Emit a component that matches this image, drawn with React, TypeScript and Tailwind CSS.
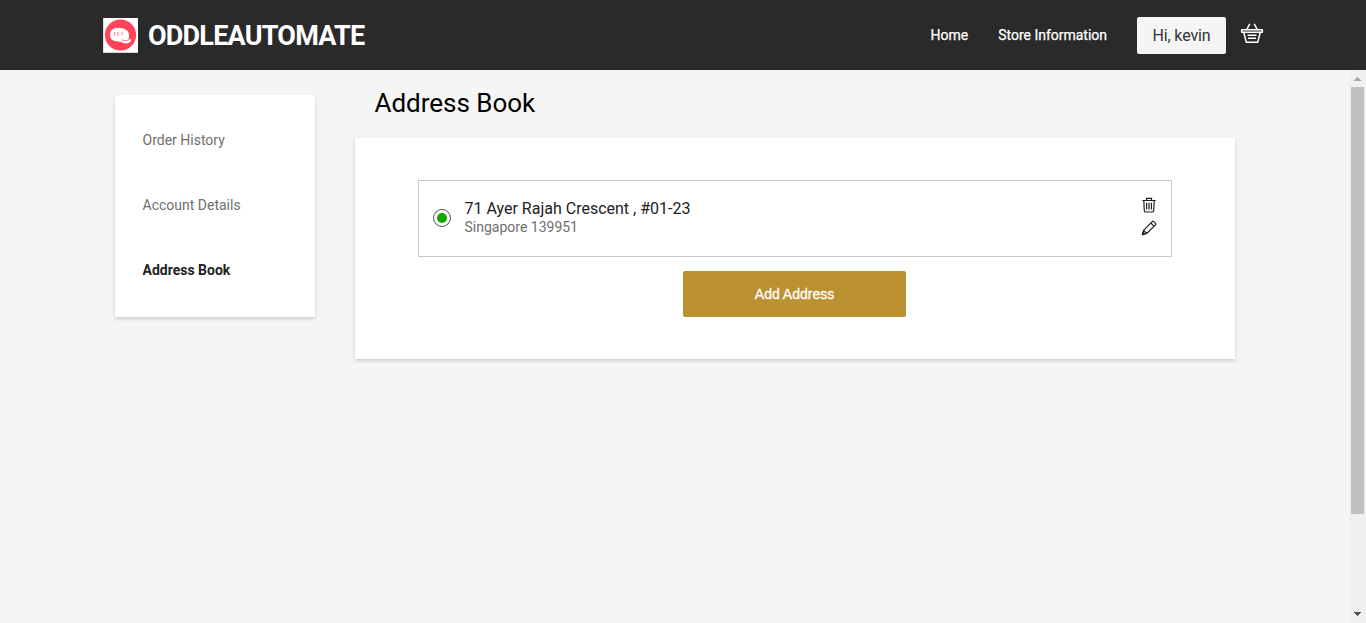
import React from "react";

function FistLogo() {
  return (
    <svg width="35" height="35" viewBox="0 0 35 35" className="shrink-0" aria-hidden="true">
      <rect width="35" height="35" fill="#fff" />
      <path d="M0 34.500h35M.3 0v35" stroke="#bbb" strokeWidth=".6" />
      <circle cx="17.500" cy="17" r="15.600" fill="#ff4459" />
      <path
        d="M7.400 14.500C7.700 12.200 8.900 11 10.700 11c.9-1.300 2.700-1.600 4.100-.8 1.400-.9 3.200-.7 4.300.4 1.600-.4 3 .2 3.700 1.400 2 .4 2.800 1.900 3.100 4.200.3 2.300.1 3.900-.6 5.600l2.800-.7c.2 2-.6 3.300-2.400 3.900-2.600.8-5.600.4-7.600-1.300-2.900.1-6.500-.4-9.200-1.900-1.700-1.600-2-4.200-1.500-7.300z"
        fill="#fff"
      />
      <path
        d="M11.700 14.500c-.3 1.300-.3 2.300-.1 3.300M15.100 14c-.3 1.400-.3 2.600 0 3.700M19 14c-.2 1.200-.1 2.100.3 3M18.700 21.900c2 .9 4.200 1 6.500.2"
        fill="none"
        stroke="#ff4459"
        strokeWidth=".7"
        strokeLinecap="round"
      />
    </svg>
  );
}

function BasketIcon() {
  return (
    <svg width="24" height="24" viewBox="0 0 24 24" fill="none" stroke="#fff" strokeWidth="1.500" strokeLinejoin="round" aria-hidden="true">
      <path d="M1.700 8.700h20.600v2.600H1.700zM3.700 11.300l2.600 9.900h11.400l2.600-9.900M6.800 8.400l3-5.600M17.200 8.400l-3-5.600M7.500 14.300h9M8 17.300h8" />
    </svg>
  );
}

function TrashIcon() {
  return (
    <svg width="16" height="16" viewBox="0 0 16 16" fill="none" stroke="#222" strokeWidth="1.200" aria-hidden="true">
      <path d="M1.300 3.500h13.400M5.500 3.300V1.400h5v1.900M2.800 3.500l.5 10.200q.1 1.300 1.300 1.300h6.800q1.200 0 1.300-1.300l.5-10.200M5.600 5.800v6.700M8 5.800v6.700M10.400 5.800v6.700" />
    </svg>
  );
}

function PencilIcon() {
  return (
    <svg width="16" height="16" viewBox="0 0 16 16" fill="none" stroke="#222" strokeWidth="1.200" strokeLinejoin="round" aria-hidden="true">
      <path d="M1.400 14.600l1.100-4.300 8.700-8.700q.8-.8 1.600 0l1.700 1.700q.8.8 0 1.600L5.700 13.500zM2.500 10.300l3.200 3.200M9.800 3l3.200 3.200" />
      <path d="M1.400 14.600l.6-2.100 1.500 1.500z" fill="#222" />
    </svg>
  );
}

function Scrollbar() {
  return (
    <div className="flex w-[17px] shrink-0 flex-col items-center justify-between bg-[#f0f0f0]" aria-hidden="true">
      <div className="flex flex-col items-center">
        <svg width="17" height="17" shapeRendering="crispEdges">
          <path d="M5 11h7v-1h-1V9h-1V8H9V7H8v1H7v1H6v1H5z" fill="#a3a3a3" />
        </svg>
        <div className="h-[427px] w-[13px] bg-[#c1c1c1]" />
      </div>
      <svg width="17" height="17" shapeRendering="crispEdges">
        <path d="M5 6h7v1h-1v1h-1v1H9v1H8V9H7V8H6V7H5z" fill="#505050" />
      </svg>
    </div>
  );
}

export default function App() {
  return (
    <div className="flex h-[623px] w-[1366px] flex-col overflow-hidden bg-[#f5f5f5] font-['Roboto',sans-serif]">
      <header className="flex h-[70px] shrink-0 items-center bg-[#2a2a2a] pr-[102px] pl-[103px] text-white">
        <FistLogo />
        <span className="mt-[2px] ml-[10px] text-[27px] leading-8 font-bold tracking-[-0.78px]">ODDLEAUTOMATE</span>
        <nav className="ml-auto flex items-center text-sm tracking-[-0.01px]">
          <a className="mr-[30px] [-webkit-text-stroke:0.25px_white]">Home</a>
          <a className="mr-[30px] [-webkit-text-stroke:0.25px_white]">Store Information</a>
          <button className="h-[37px] w-[89px] rounded-[2px] bg-[#f5f5f5] pt-[2px] text-base tracking-[-0.15px] text-[#333]">Hi, kevin</button>
          <button className="mt-[-4px] ml-[14px]" aria-label="Basket">
            <BasketIcon />
          </button>
        </nav>
      </header>

      <div className="flex min-h-0 flex-1">
        <div className="flex flex-1 items-start pl-[115px]">
          <aside className="mt-[25px] flex h-[222px] w-[200px] flex-col gap-[45px] bg-white pt-[35px] pl-[27.5px] text-sm leading-5 text-[#6f6f6f] shadow-[0_2px_4px_rgba(0,0,0,0.16)]">
            <a>Order History</a>
            <a>Account Details</a>
            <a className="font-bold text-[#222]">Address Book</a>
          </aside>

          <main className="ml-10 w-[880px] pt-[17px]">
            <h1 className="h-[51px] pl-[19.500px] text-[26px] leading-8 font-normal tracking-[-0.02px] text-black">Address Book</h1>
            <section className="flex h-[221px] flex-col items-center bg-white pt-[42px] shadow-[0_2px_4px_rgba(0,0,0,0.16)]">
              <div className="flex h-[77px] w-[754px] border border-[#c8c8c8]">
                <div className="mt-7 ml-[14px] flex size-[18px] items-center justify-center rounded-full border border-[#555]">
                  <div className="size-[10px] rounded-full bg-[#13a800]" />
                </div>
                <div className="mt-[18px] ml-[13.500px]">
                  <div className="text-base leading-5 text-[#222]">71 Ayer Rajah Crescent , #01-23</div>
                  <div className="text-sm leading-[17px] text-[#6f6f6f]">Singapore 139951</div>
                </div>
                <div className="mt-4 mr-[14px] ml-auto flex flex-col gap-[7px]">
                  <button aria-label="Delete address"><TrashIcon /></button>
                  <button aria-label="Edit address"><PencilIcon /></button>
                </div>
              </div>
              <button className="mt-[14px] mr-px h-[46px] w-[223px] rounded-[2px] bg-[#bc9131] font-['Liberation_Sans',sans-serif] text-sm font-medium text-white [-webkit-text-stroke:0.3px_white]">
                Add Address
              </button>
            </section>
          </main>
        </div>
        <Scrollbar />
      </div>
    </div>
  );
}
